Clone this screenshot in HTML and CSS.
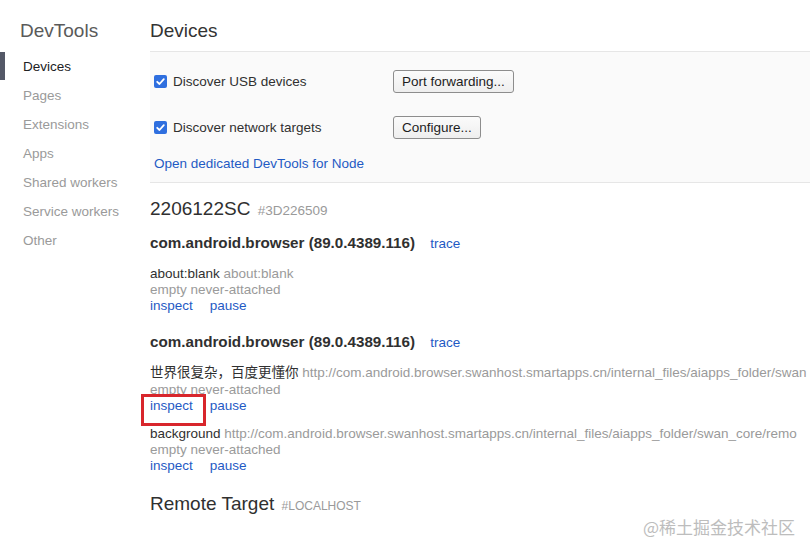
FILE: index.html
```html
<!DOCTYPE html>
<html>
<head>
<meta charset="utf-8">
<link rel="stylesheet" href="styles.css">
</head>
<body>
<div class="app">
  <nav class="sidebar">
    <h1 class="side-title">DevTools</h1>
    <ul class="nav">
      <li class="nav-item active">Devices</li>
      <li class="nav-item">Pages</li>
      <li class="nav-item">Extensions</li>
      <li class="nav-item">Apps</li>
      <li class="nav-item">Shared workers</li>
      <li class="nav-item">Service workers</li>
      <li class="nav-item">Other</li>
    </ul>
  </nav>
  <main class="main">
    <h2 class="page-title">Devices</h2>
    <section class="config">
      <div class="config-row">
        <label class="check"><span class="box"><svg viewBox="0 0 13 13" width="13" height="13"><path d="M3.2 6.8 L5.5 9 L9.8 4.2" fill="none" stroke="#fff" stroke-width="1.8" stroke-linecap="round" stroke-linejoin="round"/></svg></span>Discover USB devices</label>
        <button class="btn">Port forwarding...</button>
      </div>
      <div class="config-row">
        <label class="check"><span class="box"><svg viewBox="0 0 13 13" width="13" height="13"><path d="M3.2 6.8 L5.5 9 L9.8 4.2" fill="none" stroke="#fff" stroke-width="1.8" stroke-linecap="round" stroke-linejoin="round"/></svg></span>Discover network targets</label>
        <button class="btn">Configure...</button>
      </div>
      <div class="node-row"><a class="link">Open dedicated DevTools for Node</a></div>
    </section>

    <section class="device">
      <h3 class="device-title">2206122SC <span class="serial">#3D226509</span></h3>

      <div class="browser">
        <div class="browser-title">com.android.browser (89.0.4389.116) <a class="link trace">trace</a></div>
        <div class="target">
          <div class="line"><span class="name">about:blank</span> <span class="url">about:blank</span></div>
          <div class="line muted">empty never-attached</div>
          <div class="line actions"><a class="link">inspect</a><a class="link">pause</a></div>
        </div>
      </div>

      <div class="browser">
        <div class="browser-title">com.android.browser (89.0.4389.116) <a class="link trace">trace</a></div>
        <div class="target">
          <div class="line cjk"><span class="name">世界很复杂，百度更懂你</span> <span class="url">http://com.android.browser.swanhost.smartapps.cn/internal_files/aiapps_folder/swan</span></div>
          <div class="line muted">empty never-attached</div>
          <div class="line actions"><a class="link marked">inspect</a><a class="link">pause</a></div>
        </div>
        <div class="target">
          <div class="line"><span class="name">background</span> <span class="url">http://com.android.browser.swanhost.smartapps.cn/internal_files/aiapps_folder/swan_core/remo</span></div>
          <div class="line muted">empty never-attached</div>
          <div class="line actions"><a class="link">inspect</a><a class="link">pause</a></div>
        </div>
      </div>
    </section>

    <section class="device remote">
      <h3 class="device-title">Remote Target <span class="serial upper">#LOCALHOST</span></h3>
    </section>
  </main>
</div>
<div class="watermark">@稀土掘金技术社区</div>
</body>
</html>
```
FILE: styles.css
```css
html, body {
  margin: 0;
  padding: 0;
  background: #fff;
}
body {
  font-family: "Liberation Sans", Arial, "Noto Sans CJK SC", sans-serif;
  font-size: 13.5px;
  color: #303030;
  width: 810px;
  height: 555px;
  overflow: hidden;
  position: relative;
}
.app {
  display: flex;
  height: 555px;
}
.sidebar {
  width: 150px;
  flex: none;
}
.side-title {
  margin: 0;
  height: 52px;
  padding: 19px 0 0 20px;
  box-sizing: border-box;
  font-size: 19px;
  font-weight: normal;
  color: #5a5a5a;
  line-height: 24px;
}
.nav {
  list-style: none;
  margin: 0;
  padding: 0;
}
.nav-item {
  height: 29px;
  line-height: 29px;
  padding-left: 23px;
  color: #9a9a9a;
}
.nav-item.active {
  color: #202124;
  border-left: 5px solid #545867;
  padding-left: 18px;
  height: 28px;
  line-height: 29px;
  margin-bottom: 1px;
}
.main {
  flex: 1;
  min-width: 0;
  white-space: nowrap;
}
.page-title {
  margin: 0;
  height: 52px;
  box-sizing: border-box;
  padding-top: 19px;
  font-size: 19px;
  line-height: 24px;
  font-weight: normal;
  color: #333;
  border-bottom: 1px solid #e6e6e6;
}
.config {
  background: #fafafa;
  border-bottom: 1px solid #e6e6e6;
  padding: 6px 0 4px 4px;
}
.config-row {
  height: 46px;
  display: grid;
  grid-template-columns: 239px auto;
  align-items: center;
  justify-items: start;
}
.check {
  display: flex;
  align-items: center;
  gap: 6px;
  color: #303030;
}
.box {
  width: 13px;
  height: 13px;
  border-radius: 2px;
  background: #2f6fdf;
  display: inline-flex;
}
.btn {
  font-family: "Liberation Sans", Arial, sans-serif;
  font-size: 13.5px;
  color: #1d1d1d;
  height: 23px;
  padding: 0 8px;
  background: linear-gradient(#fbfbfb, #eeeeee);
  border: 1px solid #8d8d8d;
  border-radius: 3px;
}
.node-row {
  height: 28px;
  line-height: 28px;
}
.link {
  color: #1f5ac4;
  text-decoration: none;
}
.device {
  padding-top: 14px;
}
.device-title {
  margin: 0;
  font-size: 19px;
  line-height: 24px;
  font-weight: normal;
  color: #303030;
}
.serial {
  font-size: 13.5px;
  color: #9a9a9a;
  margin-left: 2px;
}
.serial.upper {
  font-size: 12px;
  text-transform: uppercase;
}
.browser {
  margin-top: 12px;
}
.browser + .browser {
  margin-top: 20px;
}
.browser-title {
  font-weight: bold;
  font-size: 15.2px;
  line-height: 16px;
  color: #303030;
  margin-bottom: 14px;
}
.trace {
  font-weight: normal;
  font-size: 13.5px;
  margin-left: 11px;
}
.target + .target {
  margin-top: 12px;
}
.line {
  line-height: 16px;
}
.line.cjk {
  height: 17px;
  line-height: 15px;
  overflow: hidden;
}
.name {
  color: #303030;
}
.url, .muted {
  color: #9a9a9a;
}
.actions {
  display: flex;
  gap: 17px;
}
.marked {
  position: relative;
}
.marked::after {
  content: "";
  position: absolute;
  left: -9px;
  top: -4px;
  width: 59px;
  height: 26px;
  border: 3px solid #d8262c;
}
.remote {
  padding-top: 18px;
}
.watermark {
  position: absolute;
  left: 643px;
  top: 516px;
  font-size: 17px;
  line-height: 22px;
  color: #bdbdbd;
  font-family: "Noto Sans CJK SC", sans-serif;
}
```
